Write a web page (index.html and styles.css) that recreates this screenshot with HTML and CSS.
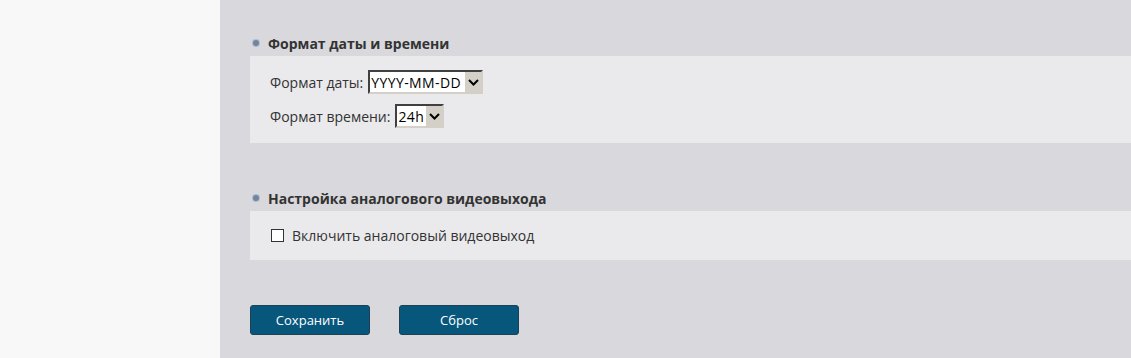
FILE: index.html
```html
<!DOCTYPE html>
<html lang="ru">
<head>
    <meta charset="utf-8"/>
    <title>Настройки</title>
<link rel="stylesheet" href="styles.css">
</head>
<body>
    <div class="layout">
        <aside class="sidebar"></aside>

        <main class="content">
            <section class="block">
                <h2 class="block-title">Формат даты и времени</h2>
                <div class="block-body">
                    <div class="field">
                        <label for="date-format">Формат даты:</label>
                        <span class="select">
                            <select id="date-format" class="select-date">
                                <option>YYYY-MM-DD</option>
                                <option>MM-DD-YYYY</option>
                                <option>DD-MM-YYYY</option>
                            </select>
                            <span class="select-btn"><svg width="11" height="7" viewBox="0 0 11 7"><path d="M1 1l4.5 4.5L10 1" fill="none" stroke="#000" stroke-width="2"/></svg></span>
                        </span>
                    </div>
                    <div class="field">
                        <label for="time-format">Формат времени:</label>
                        <span class="select">
                            <select id="time-format" class="select-time">
                                <option>24h</option>
                                <option>12h</option>
                            </select>
                            <span class="select-btn"><svg width="11" height="7" viewBox="0 0 11 7"><path d="M1 1l4.5 4.5L10 1" fill="none" stroke="#000" stroke-width="2"/></svg></span>
                        </span>
                    </div>
                </div>
            </section>

            <section class="block">
                <h2 class="block-title">Настройка аналогового видеовыхода</h2>
                <div class="block-body block-body--short">
                    <label class="check"><input type="checkbox"> Включить аналоговый видеовыход</label>
                </div>
            </section>

            <div class="actions">
                <button type="button" class="btn">Сохранить</button>
                <button type="button" class="btn">Сброс</button>
            </div>
        </main>
    </div>
</body>
</html>
```

FILE: styles.css
```css
html, body {
    margin: 0;
    height: 100%;
}
body {
    font-family: "Open Sans", "Liberation Sans", sans-serif;
    font-size: 14px;
    color: #333;
}

.layout {
    display: flex;
    min-height: 100%;
}

.sidebar {
    width: 220px;
    flex: none;
    background: #f8f8f8;
}

.content {
    flex: 1;
    background: #d9d8dc;
    padding: 33px 0 23px 30px;
}

.block + .block {
    margin-top: 45px;
}

.block-title {
    display: flex;
    align-items: center;
    margin: 0 0 3px 0;
    height: 20px;
    padding-left: 3px;
    font-size: 14px;
    font-weight: bold;
    color: #333;
}
.block-title::before {
    content: "";
    width: 6px;
    height: 6px;
    border-radius: 50%;
    background: #6f86a3;
    box-shadow: 0 0 0 1px #b3bdcb;
    margin-right: 9px;
}

.block-body {
    background: #eaeaec;
    padding: 14px 20px 15px 20px;
    display: flex;
    flex-direction: column;
    gap: 10px;
}
.block-body--short {
    padding: 13px 20px 14px 21px;
}

.field {
    display: flex;
    align-items: center;
    height: 24px;
}
.field label {
    margin-right: 5px;
}

.select {
    display: inline-flex;
    align-items: stretch;
    height: 24px;
    box-sizing: border-box;
    border-style: solid;
    border-width: 2px;
    border-color: #404040 #d4d0c8 #d4d0c8 #404040;
    background: #fff;
}
.select select {
    appearance: none;
    -webkit-appearance: none;
    border: 0;
    margin: 0;
    padding: 0 0 0 1px;
    background: #fff;
    font-family: "Open Sans", "Liberation Sans", sans-serif;
    font-size: 14px;
    letter-spacing: 0.4px;
    color: #000;
    outline: none;
}
.select-date {
    width: 94px;
}
.select-time {
    width: 28px;
}
.select-btn {
    width: 16px;
    display: flex;
    align-items: center;
    justify-content: center;
    background: #d4d0c8;
    border-left: 1px solid #fff;
}

.check {
    display: flex;
    align-items: center;
    height: 22px;
}
.check input {
    appearance: none;
    -webkit-appearance: none;
    width: 13px;
    height: 13px;
    margin: 0 8px 0 0;
    border: 1px solid #333;
    background: #fff;
    box-sizing: border-box;
}

.actions {
    display: flex;
    gap: 29px;
    margin-top: 45px;
}
.btn {
    width: 120px;
    height: 30px;
    border: 1px solid #1f3f55;
    border-radius: 3px;
    background: #07567c;
    color: #fff;
    font-family: "Open Sans", "Liberation Sans", sans-serif;
    font-size: 13px;
    padding: 0;
}
```
